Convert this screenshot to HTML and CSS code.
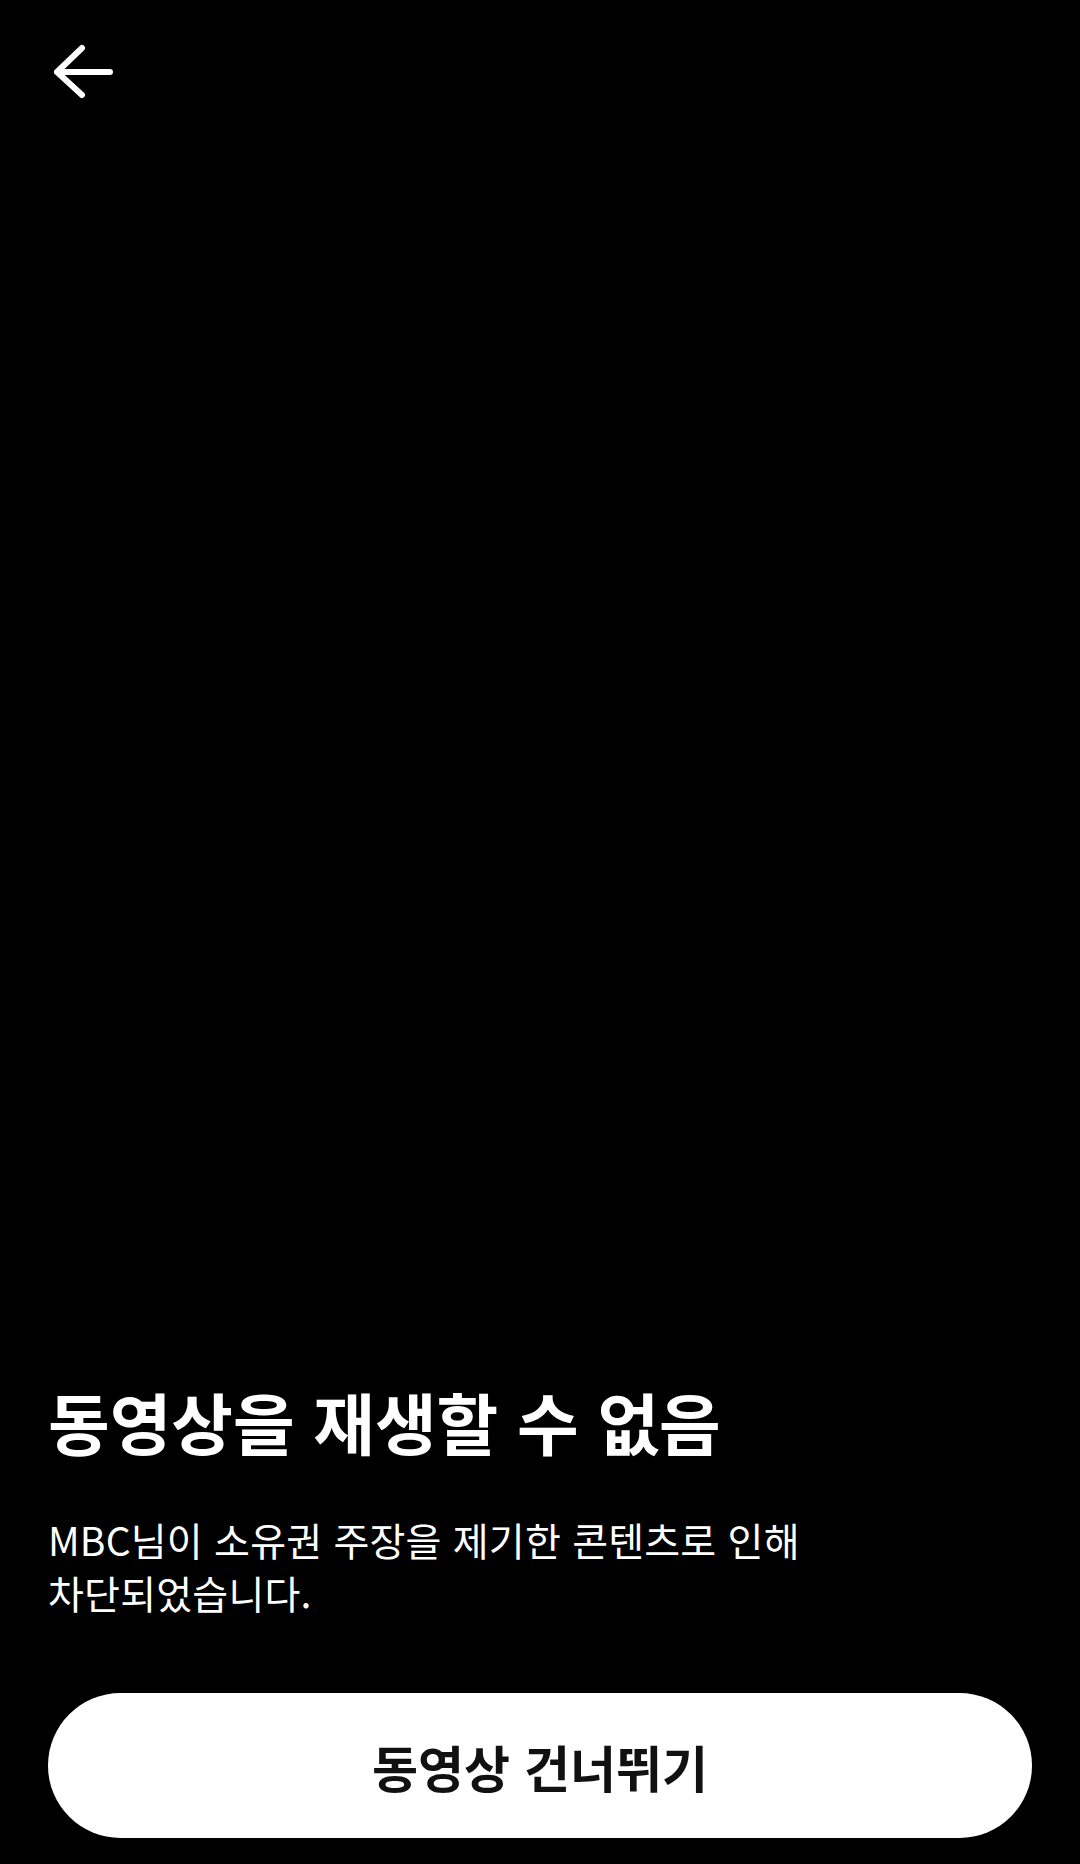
FILE: index.html
```html
<!DOCTYPE html>
<html lang="ko">
<head>
<meta charset="utf-8">
<title>동영상을 재생할 수 없음</title>
<link rel="stylesheet" href="styles.css">
</head>
<body>
<div class="screen">
  <header class="topbar">
    <button class="back" aria-label="뒤로">
      <svg class="back-icon" width="70" height="56" viewBox="0 0 70 56">
        <path d="M9 28 H62 M34 4 L9 28 L34 51" fill="none" stroke="#fff" stroke-width="6" stroke-linecap="round" stroke-linejoin="round"/>
      </svg>
    </button>
  </header>
  <main class="content">
    <h1 class="title">동영상을 재생할 수 없음</h1>
    <p class="message">MBC님이 소유권 주장을 제기한 콘텐츠로 인해<br>차단되었습니다.</p>
    <button class="skip">동영상 건너뛰기</button>
  </main>
</div>
</body>
</html>
```

FILE: styles.css
```css
html, body {
  margin: 0;
  padding: 0;
  background: #000;
}
body {
  font-family: "Noto Sans CJK KR", "Noto Sans", sans-serif;
  color: #fff;
}
.screen {
  height: 1864px;
  display: flex;
  flex-direction: column;
}
.topbar {
  padding: 44px 0 0 48px;
  display: flex;
}
.back {
  background: none;
  border: 0;
  padding: 0;
  margin: 0;
  display: flex;
  cursor: pointer;
}
.back-icon {
  display: block;
}
.content {
  margin-top: auto;
  padding: 0 48px 26px 48px;
  display: flex;
  flex-direction: column;
}
.title {
  margin: 0;
  font-size: 67px;
  line-height: 80px;
  font-weight: 700;
  letter-spacing: 0;
}
.message {
  margin: 52px 0 0 0;
  font-size: 39px;
  line-height: 53px;
  font-weight: 400;
  letter-spacing: 0.2px;
}
.skip {
  margin-top: 74px;
  height: 145px;
  border: 0;
  border-radius: 73px;
  background: #fff;
  color: #111;
  font-family: "Noto Sans CJK KR", "Noto Sans", sans-serif;
  font-size: 50px;
  font-weight: 700;
  letter-spacing: 0;
  padding: 0;
}
```
